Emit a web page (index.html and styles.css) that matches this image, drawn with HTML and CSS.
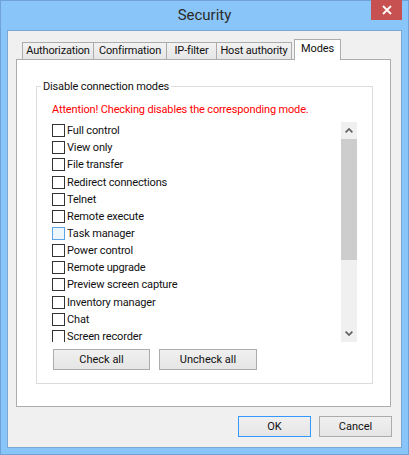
FILE: index.html
```html
<!DOCTYPE html>
<html>
<head>
<meta charset="utf-8">
<title>Security</title>
<link rel="stylesheet" href="styles.css">
</head>
<body>
<div class="window">
  <div class="titlebar">
    <span class="title">Security</span>
    <button class="close" aria-label="Close">
      <svg width="10" height="10" viewBox="0 0 10 10"><path d="M1 1 L9 9 M9 1 L1 9" stroke="#fff" stroke-width="1.8" fill="none"/></svg>
    </button>
  </div>
  <div class="client">
    <div class="tabs">
      <div class="tab tab-auth">Authorization</div>
      <div class="tab tab-conf">Confirmation</div>
      <div class="tab tab-ip">IP-filter</div>
      <div class="tab tab-host">Host authority</div>
      <div class="tab tab-modes active">Modes</div>
    </div>
    <div class="panel">
      <fieldset class="group">
        <legend>Disable connection modes</legend>
        <p class="warn">Attention! Checking disables the corresponding mode.</p>
        <div class="listbox">
          <ul class="items">
            <li><span class="cb"></span>Full control</li>
            <li><span class="cb"></span>View only</li>
            <li><span class="cb"></span>File transfer</li>
            <li><span class="cb"></span>Redirect connections</li>
            <li><span class="cb"></span>Telnet</li>
            <li><span class="cb"></span>Remote execute</li>
            <li><span class="cb hover"></span>Task manager</li>
            <li><span class="cb"></span>Power control</li>
            <li><span class="cb"></span>Remote upgrade</li>
            <li><span class="cb"></span>Preview screen capture</li>
            <li><span class="cb"></span>Inventory manager</li>
            <li><span class="cb"></span>Chat</li>
            <li><span class="cb"></span>Screen recorder</li>
          </ul>
          <div class="scrollbar">
            <div class="sb-btn">
              <svg width="8" height="5" viewBox="0 0 8 5"><polyline points="0.6,4.4 4,1 7.4,4.4" stroke="#606060" stroke-width="1.7" fill="none"/></svg>
            </div>
            <div class="sb-track"><div class="sb-thumb"></div></div>
            <div class="sb-btn">
              <svg width="8" height="5" viewBox="0 0 8 5"><polyline points="0.6,0.6 4,4 7.4,0.6" stroke="#606060" stroke-width="1.7" fill="none"/></svg>
            </div>
          </div>
        </div>
        <div class="group-buttons">
          <button class="btn btn-check">Check all</button>
          <button class="btn btn-uncheck">Uncheck all</button>
        </div>
      </fieldset>
    </div>
    <div class="dialog-buttons">
      <button class="btn btn-dialog default">OK</button>
      <button class="btn btn-dialog">Cancel</button>
    </div>
  </div>
</div>
</body>
</html>
```
FILE: styles.css
```css
* { box-sizing: border-box; }
html, body { margin: 0; padding: 0; }
body {
  width: 409px;
  height: 455px;
  font-family: Roboto, "Liberation Sans", sans-serif;
  font-size: 11px;
  letter-spacing: -0.15px;
  color: #111;
}
.window {
  width: 409px;
  height: 455px;
  background: #89c5f8;
  border: 1px solid #6fa3d6;
  padding: 0 6px 6px;
  display: flex;
  flex-direction: column;
}
.titlebar {
  height: 29px;
  position: relative;
  display: flex;
  align-items: center;
  justify-content: center;
  padding-bottom: 1px;
}
.title {
  font-size: 15px;
  letter-spacing: 0;
  color: #2b2b2b;
}
.close {
  position: absolute;
  top: -1px;
  right: 0;
  width: 31px;
  height: 20px;
  border: none;
  padding: 0;
  background: #c75050;
  display: flex;
  align-items: center;
  justify-content: center;
}
.client {
  flex: 1;
  background: #f0f0f0;
  border: 1px solid #7aa8d2;
  padding: 8px 9px 10px 8px;
  display: flex;
  flex-direction: column;
}
.tabs {
  display: flex;
  align-items: flex-end;
  padding-left: 6px;
  height: 20px;
}
.tab {
  height: 17px;
  border: 1px solid #acacac;
  border-bottom: none;
  background: linear-gradient(#f2f2f2, #e6e6e6);
  text-align: center;
  line-height: 16px;
  margin-left: -1px;
  white-space: nowrap;
}
.tab-auth { width: 72px; margin-left: 0; }
.tab-conf { width: 74px; }
.tab-ip { width: 51px; }
.tab-host { width: 76px; }
.tab-modes {
  width: 47px;
  margin-left: 2px;
  height: 21px;
  margin-bottom: -1px;
  background: #fff;
  line-height: 18px;
  position: relative;
  z-index: 1;
}
.panel {
  width: 375px;
  height: 348px;
  border: 1px solid #acacac;
  background: #fff;
}
.group {
  margin: 19px 0 0 19px;
  width: 337px;
  border: 1px solid #dcdcdc;
  padding: 0 0 13px 0;
  min-inline-size: 0;
}
.group legend {
  margin-left: 4px;
  padding: 0 2px;
  line-height: 15px;
}
.warn {
  margin: 8px 0 0;
  padding-left: 15px;
  color: #ff0000;
  line-height: 16px;
}
.listbox {
  margin: 4px 0 0 11px;
  width: 309px;
  height: 220px;
  display: flex;
  overflow: hidden;
  background: #fff;
}
.items {
  flex: 1;
  list-style: none;
  margin: 0;
  padding: 0 0 0 4px;
}
.items li {
  height: 17.17px;
  display: flex;
  align-items: center;
  white-space: nowrap;
}
.cb {
  width: 13px;
  height: 13px;
  border: 1px solid #333;
  background: #fff;
  margin-right: 2px;
  flex: none;
}
.cb.hover {
  border-color: #5ba4e6;
  background: #eef6fd;
}
.scrollbar {
  width: 16px;
  display: flex;
  flex-direction: column;
  background: #f0f0f0;
}
.sb-btn {
  height: 17px;
  display: flex;
  align-items: center;
  justify-content: center;
}
.sb-track { flex: 1; }
.sb-thumb {
  height: 121px;
  background: #cdcdcd;
}
.group-buttons {
  display: flex;
  gap: 9px;
  margin: 7px 0 0 16px;
}
.btn {
  height: 21px;
  border: 1px solid #acacac;
  background: linear-gradient(#f0f0f0, #e5e5e5);
  font: inherit;
  color: #111;
  padding: 0;
}
.btn-check { width: 97px; }
.btn-uncheck { width: 98px; }
.dialog-buttons {
  display: flex;
  justify-content: flex-end;
  gap: 8px;
  margin-top: 9px;
}
.btn-dialog { width: 73px; }
.btn.default { border-color: #3399ff; }
```
